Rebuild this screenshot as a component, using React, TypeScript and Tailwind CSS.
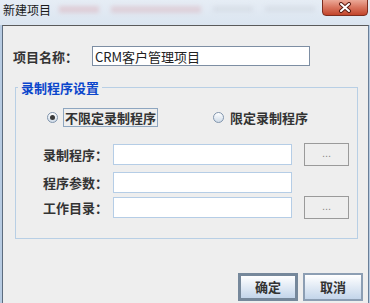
import { useState } from "react"

const cjk = "font-['Noto_Sans_CJK_SC','Noto_Sans',sans-serif]"

function Radio({ checked }: { checked: boolean }) {
  return (
    <span className="flex h-[11px] w-[11px] items-center justify-center rounded-full border border-[#8195ad] bg-gradient-to-b from-[#ffffff] to-[#cfdbe8]">
      {checked && <span className="h-[5px] w-[5px] rounded-full bg-[#3a3a3a]" />}
    </span>
  )
}

function DotsButton() {
  return (
    <button className="flex h-[23px] w-[45px] items-end justify-center border border-[#9a9a9a] bg-[#eeeeee] pb-[6px] font-['Liberation_Sans',sans-serif] text-[11px] leading-none text-[#8a8a8a]">
      ...
    </button>
  )
}

function Field({ label, button, className }: { label: string; button?: boolean; className?: string }) {
  return (
    <div className={`flex items-center ${className ?? ""}`}>
      <span className="ml-[27px] w-[70px] text-[13px] font-bold leading-[17px] text-[#333]">{label}</span>
      <input className="h-[21px] w-[179px] border border-[#b5cde6] bg-white px-[3px] text-[13px] outline-none" />
      {button && <div className="ml-[12px]"><DotsButton /></div>}
    </div>
  )
}

export default function App() {
  const [limited, setLimited] = useState(false)
  const [name, setName] = useState("CRM客户管理项目")

  return (
    <div className={`flex h-[303px] w-[370px] flex-col overflow-hidden bg-[#b7cbe2] ${cjk}`}>
      {/* title bar */}
      <div className="flex h-[25px] items-start bg-gradient-to-b from-[#e6edf5] to-[#dbe5f0]">
        <span className="ml-[3px] mt-[2px] shrink-0 whitespace-nowrap text-[12px] leading-[16px] text-[#1a1a1a]">新建项目</span>
        <div className="ml-[8px] mt-[6px] flex min-w-0 gap-[12px] opacity-40 blur-[2px]">
          <span className="h-[7px] w-[40px] bg-[#d9a3ad]" />
          <span className="h-[7px] w-[90px] bg-[#d8aab4]" />
          <span className="h-[6px] w-[40px] bg-[#c9cfd8]" />
          <span className="h-[6px] w-[50px] bg-[#c9cfd8]" />
        </div>
        <button className="ml-auto mr-[2px] mt-[-1px] flex h-[17px] w-[46px] shrink-0 items-center justify-center rounded-b-[4px] border border-[#7c2d1f] bg-gradient-to-b from-[#eba897] via-[#d8735d] to-[#c2442a]">
          <svg width="14" height="11" viewBox="0 0 14 11">
            <path d="M3 2 L11 9 M11 2 L3 9" stroke="#5a1c12" strokeWidth="4" strokeLinecap="round" />
            <path d="M3 2 L11 9 M11 2 L3 9" stroke="#ffffff" strokeWidth="2" strokeLinecap="round" />
          </svg>
        </button>
      </div>

      {/* body */}
      <div className="flex flex-1 pl-[2px] pr-[1px]">
        <div className="flex flex-1 flex-col border-l border-r border-t border-l-[#5d6c7e] border-r-[#6a7f98] border-t-[#5a5a5a] bg-[#eeeeee]">
          <div className="mt-[20px] flex items-center">
            <span className="ml-[10px] w-[79px] text-[13px] font-bold leading-[17px] text-[#333]">项目名称：</span>
            <input
              value={name}
              onChange={(e) => setName(e.target.value)}
              className="h-[20px] w-[218px] border border-[#7d8ea3] bg-white px-[2px] text-[13px] text-[#222] outline-none"
            />
          </div>

          <fieldset className="ml-[12px] mt-[13px] w-[343px] border border-[#b8cfe5] pb-[19px]">
            <legend className="ml-[2px] px-[3px] text-[13px] font-bold leading-[17px] text-[#0b46cc]">录制程序设置</legend>

            <div className="mt-[12px] flex h-[19px] items-center">
              <label className="ml-[31px] flex items-center" onClick={() => setLimited(false)}>
                <Radio checked={!limited} />
                <span className="ml-[5px] border border-[#8ea6c0] px-[1px] text-[13px] font-bold leading-[17px] text-[#333]">不限定录制程序</span>
              </label>
              <label className="ml-[55px] flex items-center" onClick={() => setLimited(true)}>
                <Radio checked={limited} />
                <span className="ml-[6px] text-[13px] font-bold leading-[17px] text-[#333]">限定录制程序</span>
              </label>
            </div>

            <Field label="录制程序：" button className="mt-[16px]" />
            <Field label="程序参数：" className="mt-[6px]" />
            <Field label="工作目录：" button className="mt-[3px]" />
          </fieldset>

          <div className="mr-[5px] mt-[34px] flex justify-end gap-[5px]">
            <button className="h-[28px] w-[60px] border-[3px] border-[#76889b] bg-gradient-to-b from-[#ffffff] to-[#c3d5ea] text-[13px] font-bold text-[#333]">确定</button>
            <button className="h-[28px] w-[60px] border-2 border-[#8c9eb3] bg-gradient-to-b from-[#ffffff] to-[#c3d5ea] text-[13px] font-bold text-[#333]">取消</button>
          </div>
        </div>
      </div>
    </div>
  )
}
